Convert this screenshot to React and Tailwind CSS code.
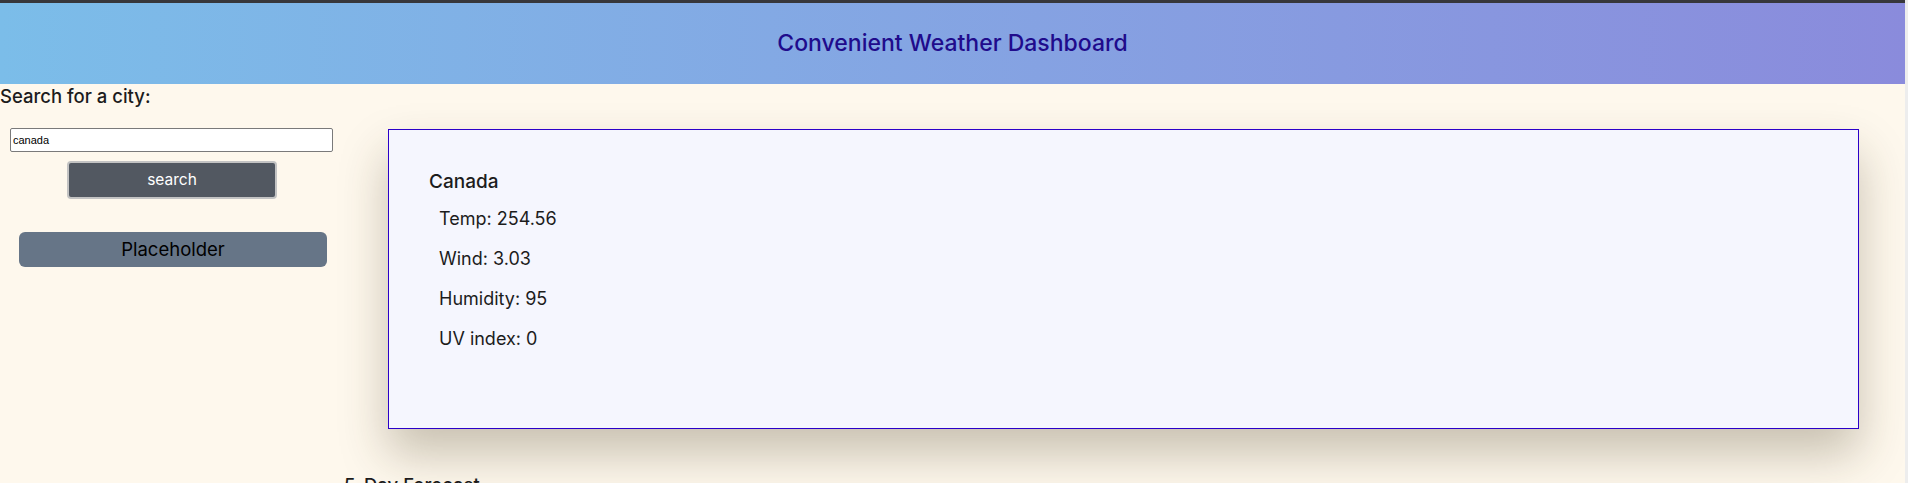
import React from "react";

const stats = [
  { label: "Temp", value: "254.56" },
  { label: "Wind", value: "3.03" },
  { label: "Humidity", value: "95" },
  { label: "UV index", value: "0" },
];

const Sidebar = () => {
  return (
    <aside className="w-[344px] shrink-0">
      <h2 className="text-[18.5px] leading-[22px] font-medium text-[#1c1c1c] pt-[1px]">
        Search for a city:
      </h2>
      <div className="flex flex-col items-center pt-[21px]">
        <input
          type="text"
          defaultValue="canada"
          className="ml-[-1px] w-[323px] h-[24px] px-[2px] bg-white border border-[#7a7a7a] rounded-[2px] text-[11px] text-black outline-none"
          style={{ fontFamily: '"Liberation Sans", Arial, sans-serif' }}
        />
        <button className="mt-[9px] w-[210px] h-[38px] rounded-[4px] border-2 border-[#c3c3c3] bg-[#525861] text-white text-[15.5px]">
          search
        </button>
        <button className="mt-[33px] ml-[2px] w-[308px] h-[35px] rounded-[6px] bg-[#667587] text-black text-[18.5px]">
          Placeholder
        </button>
      </div>
    </aside>
  );
};

const CurrentWeather = () => {
  return (
    <section className="ml-[44px] mr-[46px] mt-[45px] h-[300px] border border-[#2b00c9] bg-[#f5f6fe] pt-[40px] pl-[40px] shadow-[0_25px_45px_rgba(60,50,20,0.28)]">
      <h3 className="text-[19px] leading-[24px] font-medium text-[#1c1c1c]">Canada</h3>
      <ul className="mt-[5px] pl-[10px]">
        {stats.map((s) => (
          <li key={s.label} className="h-[40px] leading-[40px] text-[18px] text-[#1c1c1c]">
            {s.label}: {s.value}
          </li>
        ))}
      </ul>
    </section>
  );
};

export default function App() {
  return (
    <div className="min-h-screen flex bg-[#fef8ed]" style={{ fontFamily: "Inter, sans-serif" }}>
      <div className="flex-1 flex flex-col">
        <div className="h-[3px] bg-[#37373b]" />
        <header className="h-[81px] flex items-center justify-center bg-gradient-to-r from-[#7bbde9] to-[#8a8bdc]">
          <h1 className="text-[23px] font-medium text-[#200b8c]">Convenient Weather Dashboard</h1>
        </header>
        <div className="flex">
          <Sidebar />
          <main className="flex-1">
            <CurrentWeather />
            <h2 className="mt-[43px] text-[18.5px] font-medium text-[#1c1c1c]">5-Day Forecast</h2>
          </main>
        </div>
      </div>
      <div className="w-[3px] bg-[#ededed]" />
    </div>
  );
}
